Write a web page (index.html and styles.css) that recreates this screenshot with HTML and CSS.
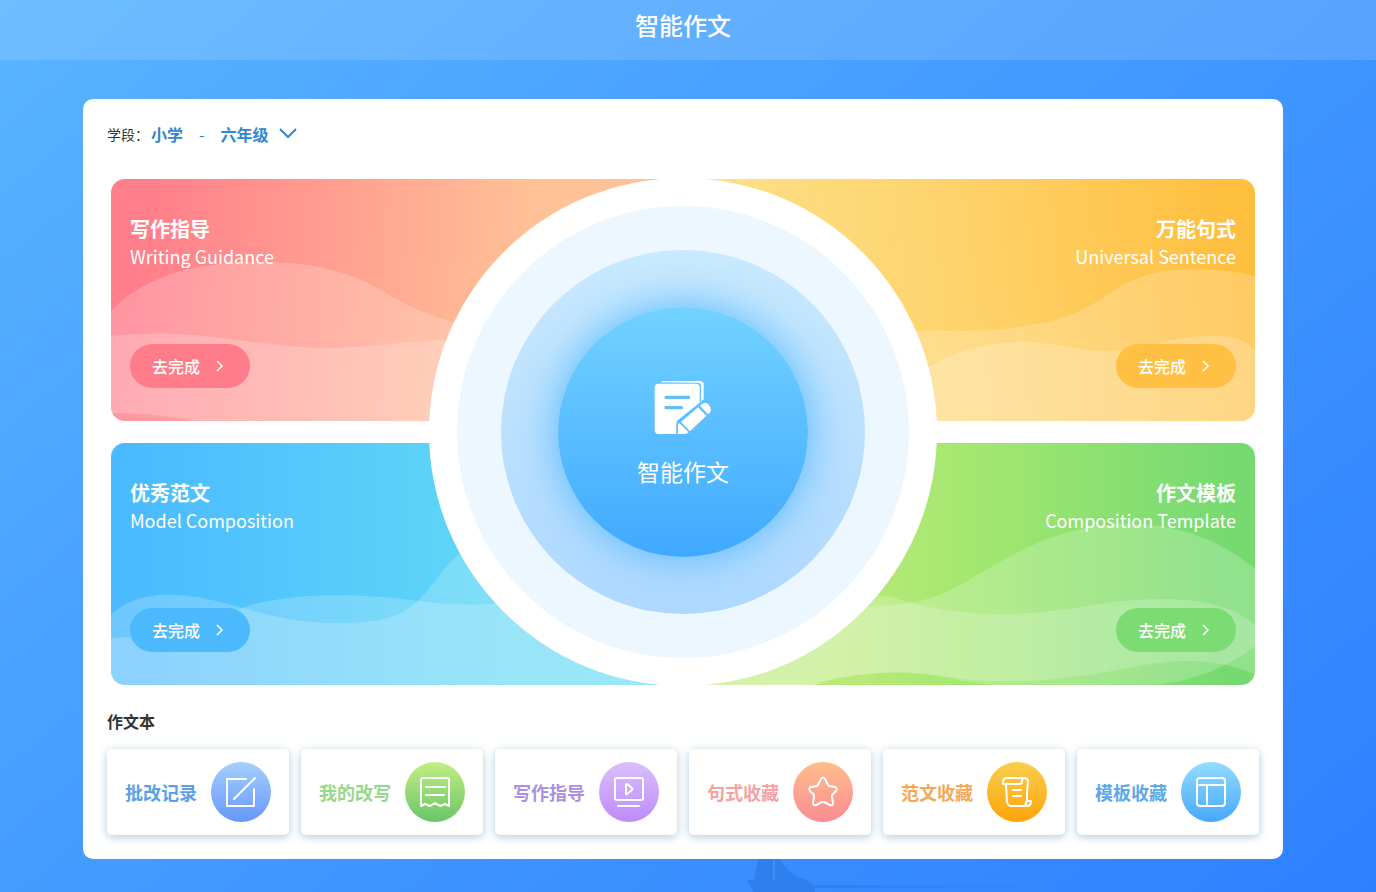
FILE: index.html
```html
<!DOCTYPE html>
<html lang="zh-CN">
<head>
    <meta charset="UTF-8">
    <meta name="viewport" content="width=device-width, initial-scale=1.0">
    <title>智能作文</title>
    <link rel="stylesheet" href="styles.css">
</head>
<body>
    <header class="top-bar">
        <h1>智能作文</h1>
    </header>

    <main class="panel">
        <!-- Grade picker -->
        <div class="grade-row">
            <label for="grade">学段：</label>
            <span class="stage">小学</span>
            <span class="dash">-</span>
            <span class="grade-picker">
                <select id="grade">
                    <option>一年级</option>
                    <option>二年级</option>
                    <option>三年级</option>
                    <option>四年级</option>
                    <option>五年级</option>
                    <option selected>六年级</option>
                </select>
                <svg class="chevron" viewBox="0 0 20 12"><path d="M2 2l8 8 8-8"/></svg>
            </span>
        </div>

        <!-- Four modules around the main button -->
        <section class="hub">
            <article class="module red">
                <svg class="waves" viewBox="0 0 561 242" preserveAspectRatio="none">
                    <path d="M0 132C40 90 100 83 150 83C200 83 240 92 275 114C300 129 320 138 345 143C400 153 480 150 561 120V242H0Z"/>
                    <path d="M0 157C60 150 110 159 160 165C220 173 260 167 300 163C380 155 480 165 561 160V242H85C50 236 30 234 0 234Z"/>
                </svg>
                <h2>写作指导</h2>
                <p>Writing Guidance</p>
                <button type="button">去完成<svg viewBox="0 0 8 14"><path d="M1 2l5 5-5 5"/></svg></button>
            </article>

            <article class="module yellow">
                <svg class="waves" viewBox="0 0 561 242" preserveAspectRatio="none">
                    <path d="M0 140C80 150 180 151 245 152C310 153 355 146 385 132C415 118 420 108 447 98C480 87 525 89 561 97V242H0Z"/>
                    <path d="M0 220C80 200 180 200 236 187C262 173 290 163 325 163C365 163 385 172 415 172C450 172 475 158 510 157C535 156 550 158 561 171V242H0Z"/>
                </svg>
                <h2>万能句式</h2>
                <p>Universal Sentence</p>
                <button type="button">去完成<svg viewBox="0 0 8 14"><path d="M1 2l5 5-5 5"/></svg></button>
            </article>

            <article class="module blue">
                <svg class="waves" viewBox="0 0 561 242" preserveAspectRatio="none">
                    <path d="M0 172C25 145 75 150 105 158C150 169 175 180 225 180C270 180 290 175 310 155C325 138 335 120 355 105C420 60 500 90 561 100V242H0Z"/>
                    <path d="M0 195C70 193 105 173 140 162C190 149 250 151 300 157C340 162 370 164 410 158C470 150 520 160 561 160V242H0Z"/>
                </svg>
                <h2>优秀范文</h2>
                <p>Model Composition</p>
                <button type="button">去完成<svg viewBox="0 0 8 14"><path d="M1 2l5 5-5 5"/></svg></button>
            </article>

            <article class="module green">
                <svg class="waves" viewBox="0 0 561 242" preserveAspectRatio="none">
                    <path d="M0 180C80 170 130 163 165 163C230 163 250 152 285 131C325 108 370 80 440 81C490 82 530 100 561 126V231C520 215 490 216 450 222C400 232 350 240 300 238C250 237 230 224 165 232C140 235 130 238 120 242H0Z"/>
                    <path d="M0 140C80 140 170 147 204 156C235 165 265 171 310 171C370 171 410 156 470 156C520 156 550 170 561 183V203C540 220 500 240 455 242H300C250 237 230 224 165 232C140 235 130 238 120 242H0Z"/>
                </svg>
                <h2>作文模板</h2>
                <p>Composition Template</p>
                <button type="button">去完成<svg viewBox="0 0 8 14"><path d="M1 2l5 5-5 5"/></svg></button>
            </article>

            <div class="ring-outer">
                <div class="ring-middle">
                    <div class="ring-inner">
                        <button type="button" class="main-button">
                            <svg viewBox="0 0 174 165">
                                <path d="M20 7Q23 3 30 3H138Q149 3 149 14V58Q143 62 141 66V19Q141 8 130 8Z"/>
                                <path d="M14 11H126Q137 11 137 23V68L71 121Q67 125 67 132V162H14Q2 162 2 150V23Q2 11 14 11Z"/>
                                <path class="line" d="M36 52H104M36 83H82"/>
                                <path d="M132 82L157 107L108 154L81 126Z"/>
                                <path d="M138 77Q150 64 163 73Q175 86 168 98L162 103Z"/>
                                <path d="M76 129L104 157Q100 162 92 162H72V136Q72 131 76 129Z"/>
                            </svg>
                            <span>智能作文</span>
                        </button>
                    </div>
                </div>
            </div>
        </section>

        <h3 class="book-title">作文本</h3>
        <nav class="book">
            <a href="#" class="tool records">批改记录
                <svg viewBox="0 0 60 60"><path d="M35 17H16V44H43V27M23 37L44 16"/></svg>
            </a>
            <a href="#" class="tool rewrites">我的改写
                <svg viewBox="0 0 60 60"><path d="M16 44V18q0-2 2-2h24q2 0 2 2v26l-4-2-5 2-5-3-5 3-5-2zM21 25h19M21 33h18"/></svg>
            </a>
            <a href="#" class="tool guidance">写作指导
                <svg viewBox="0 0 60 60"><path d="M18 16h24q2 0 2 2v18q0 2-2 2h-24q-2 0-2-2v-18q0-2 2-2zM27 23v9q0 1 1 0l5-4q1-1 0-2l-5-4q-1 0-1 1zM19 44h21"/></svg>
            </a>
            <a href="#" class="tool sentences">句式收藏
                <svg viewBox="0 0 60 60"><path d="M28 17q2-3 4 0l3 6 1 1 6 1q3 1 1 4l-4 4v2l1 6q0 3-3 2l-6-3h-2l-6 3q-3 1-3-2l1-6v-2l-4-4q-2-3 1-4l6-1 1-1z"/></svg>
            </a>
            <a href="#" class="tool essays">范文收藏
                <svg viewBox="0 0 60 60"><path d="M19 22h-3v-2q0-4 4-4h17q4 0 4 4l-1 10v10M19 22h14q2 0 2-3 0-3 3-3M19 22l1 18q1 4 5 4h15q4 0 4-5h-3q-2 0-2 2 0 3-3 3M26 28h8M26 34h8"/></svg>
            </a>
            <a href="#" class="tool templates">模板收藏
                <svg viewBox="0 0 60 60"><path d="M19 16h22q3 0 3 3v22q0 3-3 3h-22q-3 0-3-3v-22q0-3 3-3zM16 23h28M26 23v21"/></svg>
            </a>
        </nav>
    </main>

    <footer class="sea">
        <svg viewBox="0 0 320 33">
            <defs>
                <linearGradient id="water">
                    <stop offset="0" stop-color="#2f7fee"/>
                    <stop offset="1" stop-color="#2f7fee" stop-opacity="0"/>
                </linearGradient>
            </defs>
            <path d="M14 0H36C42 12 52 18 63 21L71 27V33H10L3 21H10Q13 10 14 0Z"/>
            <path class="water" d="M71 26H320V29H71Z"/>
            <path class="mast" d="M30 0V20"/>
        </svg>
    </footer>
</body>
</html>
```

FILE: styles.css
```css
* {
    box-sizing: border-box;
}

body {
    margin: 0;
    padding-right: 10px;
    min-height: 100vh;
    font-family: "Noto Sans CJK SC", sans-serif;
    color: #333;
    background: linear-gradient(140deg, #59b4ff 0%, #4299ff 50%, #2f80ff 100%);
    overflow-x: hidden;
}

h1, h2, h3, p {
    margin: 0;
}

button, select {
    font-family: inherit;
    border: none;
    cursor: pointer;
}

/* Translucent bar across the whole window */
.top-bar {
    height: 60px;
    margin-right: -10px;
    padding: 7px 10px 0 0;
    background: rgba(255, 255, 255, 0.13);
    text-align: center;
}

.top-bar h1 {
    font-size: 24px;
    font-weight: 500;
    line-height: 36px;
    color: #fff;
}

.panel {
    max-width: 1200px;
    margin: 39px auto 0;
    padding: 24px;
    background: #fff;
    border-radius: 10px;
}

/* Grade picker */
.grade-row {
    display: flex;
    align-items: center;
    height: 22px;
    margin-bottom: 34px;
    font-size: 16px;
    color: #2f86d2;
}

.grade-row label {
    margin-right: 2px;
    font-size: 14px;
    color: #333;
}

.stage {
    font-weight: 700;
}

.dash {
    margin: 0 16px;
}

.grade-picker {
    position: relative;
}

.grade-picker select {
    appearance: none;
    padding: 0 28px 0 0;
    background: none;
    font-size: 16px;
    font-weight: 700;
    color: inherit;
}

.chevron {
    position: absolute;
    right: 0;
    top: 5px;
    width: 20px;
    height: 12px;
    fill: none;
    stroke: #2f86d2;
    stroke-width: 2;
    pointer-events: none;
}

/* Module cards with the round button over them */
.hub {
    position: relative;
    display: grid;
    grid-template-columns: 1fr 1fr;
    gap: 22px;
    margin: 0 4px;
}

.module {
    position: relative;
    display: flex;
    flex-direction: column;
    align-items: flex-start;
    height: 242px;
    padding: 36px 19px 0;
    border-radius: 14px;
    overflow: hidden;
    color: #fff;
}

.module h2, .module p, .module button {
    position: relative;
}

.module h2 {
    font-size: 20px;
    line-height: 28px;
}

.module p {
    font-size: 18px;
    line-height: 26px;
}

.module button {
    display: flex;
    align-items: center;
    justify-content: center;
    gap: 16px;
    width: 120px;
    height: 44px;
    margin-top: 75px;
    padding: 0 4px 0 0;
    border-radius: 22px;
    font-size: 16px;
    font-weight: 500;
    color: #fff;
}

.module button svg {
    width: 8px;
    height: 14px;
    fill: none;
    stroke: #fff;
    stroke-width: 1.5;
}

.waves {
    position: absolute;
    inset: 0;
    width: 100%;
    height: 100%;
    fill: rgba(255, 255, 255, 0.2);
}

.red {
    background: linear-gradient(95deg, #ff7e8b 6%, #ffc296 74%);
}

.red button {
    background: #ff7d8a;
}

.yellow {
    background: linear-gradient(83deg, #fce38c 0%, #fed26a 50%, #ffbf3f 95%);
}

.yellow button {
    background: #ffc043;
}

.blue {
    background: linear-gradient(90deg, #4ab9ff 0%, #5ed6f7 65%, #63dcf5 100%);
}

.blue button {
    background: #4cb9fd;
}

.green {
    background: linear-gradient(90deg, #bcea7a 25%, #a3e770 50%, #76da71 95%);
}

.green button {
    background: #7bdc73;
}

.yellow, .green {
    align-items: flex-end;
}

.ring-outer {
    position: absolute;
    top: 50%;
    left: 50%;
    transform: translate(-50%, -50%);
    padding: 28px;
    border-radius: 50%;
    background: #fff;
}

.ring-middle {
    padding: 44px;
    border-radius: 50%;
    background: #ecf7ff;
}

.ring-inner {
    padding: 57px;
    border-radius: 50%;
    background: linear-gradient(#c9e9fd, #aed8ff);
}

.main-button {
    display: flex;
    flex-direction: column;
    align-items: center;
    gap: 19px;
    width: 250px;
    height: 250px;
    padding: 73px 0 0;
    border-radius: 50%;
    background: linear-gradient(#72d2ff, #40a9ff);
    box-shadow: 0 0 40px 2px #5cbcff;
    font-size: 23px;
    line-height: 34px;
    color: #fff;
}

.main-button svg {
    width: 58px;
    height: 55px;
    fill: #fff;
}

.main-button .line {
    stroke: #62bdf8;
    stroke-width: 10;
    stroke-linecap: round;
}

/* Notebook shortcuts */
.book-title {
    margin: 24px 0 16px;
    font-size: 16px;
    line-height: 24px;
}

.book {
    display: grid;
    grid-template-columns: repeat(6, 1fr);
    gap: 12px;
}

.tool {
    display: flex;
    align-items: center;
    justify-content: space-between;
    height: 86px;
    padding: 0 18px;
    border-radius: 5px;
    box-shadow: 0 2px 8px rgba(70, 140, 180, 0.45);
    font-size: 18px;
    font-weight: 700;
    text-decoration: none;
    white-space: nowrap;
}

.tool svg {
    width: 60px;
    height: 60px;
    border-radius: 50%;
    fill: none;
    stroke: #fff;
    stroke-width: 2;
    stroke-linecap: round;
    stroke-linejoin: round;
}

.records {
    color: #5c9fe6;
}

.records svg {
    background: linear-gradient(#a5d0fc, #6797fc);
}

.rewrites {
    color: #96d98c;
}

.rewrites svg {
    background: linear-gradient(#c3ee82, #69c568);
}

.guidance {
    color: #ab90e0;
}

.guidance svg {
    background: linear-gradient(#dabffc, #bd8bf8);
}

.sentences {
    color: #f6a0a0;
}

.sentences svg {
    background: linear-gradient(#ffbd8b, #fb8c94);
}

.essays {
    color: #f5a852;
}

.essays svg {
    background: linear-gradient(#f9ce4c, #ffa40b);
}

.templates {
    color: #5ba8ea;
}

.templates svg {
    background: linear-gradient(#92dcff, #46a8fb);
}

/* Boat on the horizon */
.sea {
    padding-left: 54.5%;
    height: 33px;
}

.sea svg {
    display: block;
    width: 320px;
    height: 33px;
    fill: #2f7fee;
}

.sea .water {
    fill: url(#water);
}

.sea .mast {
    stroke: #5a9cf5;
}
```
